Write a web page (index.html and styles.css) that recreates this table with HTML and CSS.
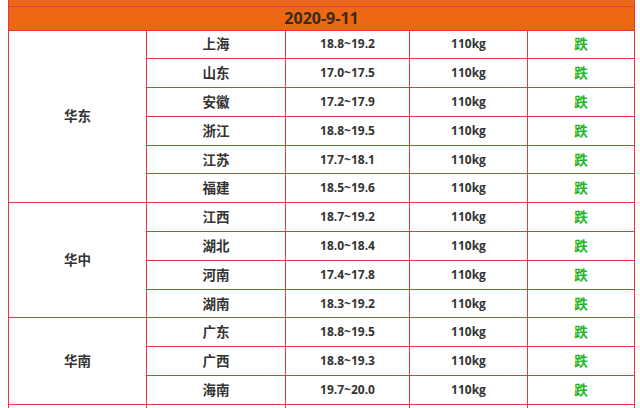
FILE: index.html
```html
<!DOCTYPE html>
<html lang="zh">
<head>
<meta charset="utf-8">
<link rel="stylesheet" href="styles.css">
</head>
<body>
<div class="wrap">
<table class="price">
  <colgroup>
    <col class="c1"><col class="c2"><col class="c3"><col class="c4"><col class="c5">
  </colgroup>
  <tr class="top"><td colspan="5"></td></tr>
  <tr class="date"><td colspan="5">2020-9-11</td></tr>
  <tr><td rowspan="6" class="region"><span class="cn">华东</span></td><td><span class="cn">上海</span></td><td>18.8~19.2</td><td>110kg</td><td class="down"><span class="cn">跌</span></td></tr>
  <tr><td><span class="cn">山东</span></td><td>17.0~17.5</td><td>110kg</td><td class="down"><span class="cn">跌</span></td></tr>
  <tr><td><span class="cn">安徽</span></td><td>17.2~17.9</td><td>110kg</td><td class="down"><span class="cn">跌</span></td></tr>
  <tr><td><span class="cn">浙江</span></td><td>18.8~19.5</td><td>110kg</td><td class="down"><span class="cn">跌</span></td></tr>
  <tr><td><span class="cn">江苏</span></td><td>17.7~18.1</td><td>110kg</td><td class="down"><span class="cn">跌</span></td></tr>
  <tr><td><span class="cn">福建</span></td><td>18.5~19.6</td><td>110kg</td><td class="down"><span class="cn">跌</span></td></tr>
  <tr><td rowspan="4" class="region"><span class="cn">华中</span></td><td><span class="cn">江西</span></td><td>18.7~19.2</td><td>110kg</td><td class="down"><span class="cn">跌</span></td></tr>
  <tr><td><span class="cn">湖北</span></td><td>18.0~18.4</td><td>110kg</td><td class="down"><span class="cn">跌</span></td></tr>
  <tr><td><span class="cn">河南</span></td><td>17.4~17.8</td><td>110kg</td><td class="down"><span class="cn">跌</span></td></tr>
  <tr><td><span class="cn">湖南</span></td><td>18.3~19.2</td><td>110kg</td><td class="down"><span class="cn">跌</span></td></tr>
  <tr><td rowspan="3" class="region"><span class="cn">华南</span></td><td><span class="cn">广东</span></td><td>18.8~19.5</td><td>110kg</td><td class="down"><span class="cn">跌</span></td></tr>
  <tr><td><span class="cn">广西</span></td><td>18.8~19.3</td><td>110kg</td><td class="down"><span class="cn">跌</span></td></tr>
  <tr><td><span class="cn">海南</span></td><td>19.7~20.0</td><td>110kg</td><td class="down"><span class="cn">跌</span></td></tr>
  <tr><td rowspan="2" class="region"></td><td></td><td></td><td></td><td></td></tr>
</table>
</div>
</body>
</html>
```

FILE: styles.css
```css
html, body {
  margin: 0;
  padding: 0;
  background: #ffffff;
  overflow: hidden;
}
.wrap {
  padding-left: 8px;
  width: 626px;
}
.price {
  width: 626px;
  border-collapse: collapse;
  table-layout: fixed;
  font-family: "Open Sans", "Noto Sans CJK SC", sans-serif;
  font-size: 12px;
  font-weight: 700;
  color: #333333;
}
.c1 { width: 138px; }
.c2 { width: 139px; }
.c3 { width: 124px; }
.c4 { width: 118px; }
.c5 { width: 107px; }
.price td {
  border: 1px solid #e8373f;
  text-align: center;
  vertical-align: middle;
  height: 27.8px;
  padding: 0;
  line-height: 16px;
}
.price tr.top td {
  height: 6px;
  background: #ec6814;
  border-top: none;
}
.price tr.date td {
  height: 22.5px;
  background: #ec6814;
  font-size: 16px;
  line-height: 20px;
  color: #3a2a1a;
}
.price td.region {
  vertical-align: middle;
}
.cn {
  font-family: "Noto Sans CJK SC", sans-serif;
  font-size: 13.5px;
  font-weight: 700;
}
.down {
  color: #1fb51f;
}
```
